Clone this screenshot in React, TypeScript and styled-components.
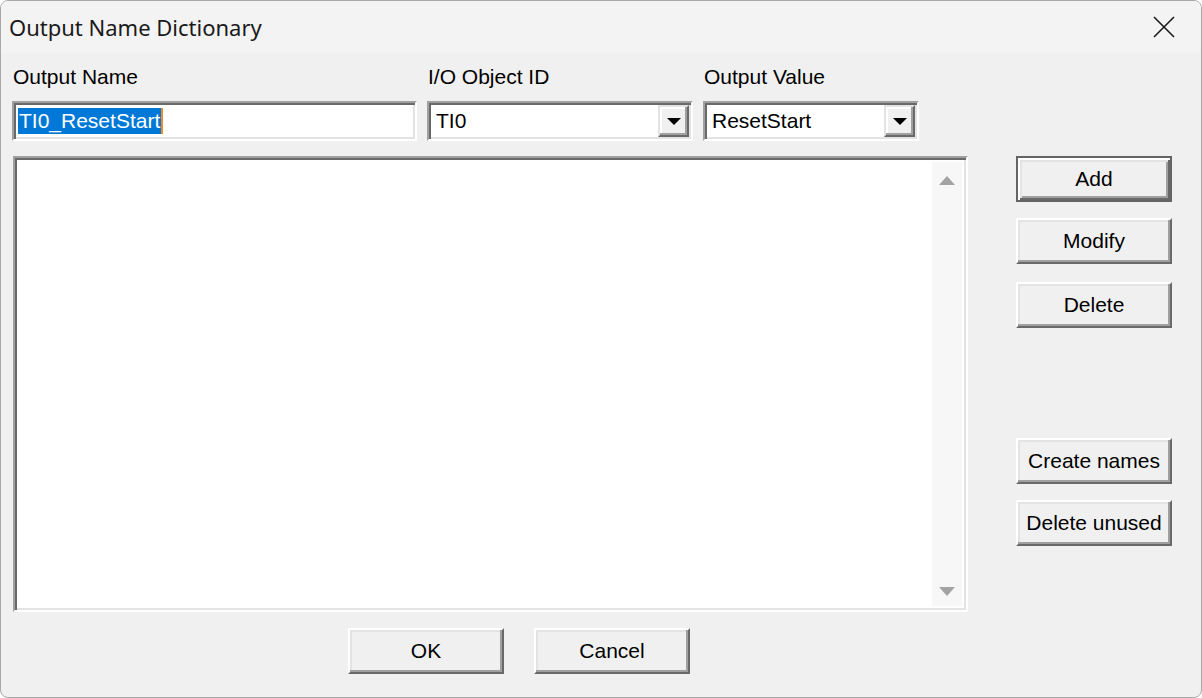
import React from 'react'
import styled, { createGlobalStyle } from 'styled-components'

const GlobalStyle = createGlobalStyle`
  html, body {
    margin: 0;
    padding: 0;
    background: #ffffff;
  }
`

const Window = styled.div`
  box-sizing: border-box;
  width: 1202px;
  height: 698px;
  border: 1px solid #a8a8a8;
  border-radius: 8px;
  background: #f0f0f0;
  overflow: hidden;
  display: flex;
  flex-direction: column;
  font-family: 'Liberation Sans', Arial, sans-serif;
  font-size: 21px;
  color: #000;
`

const TitleBar = styled.div`
  height: 52px;
  flex: none;
  display: flex;
  align-items: center;
  justify-content: space-between;
  padding: 0 0 0 8px;
  background: #f3f3f3;
  font-family: 'Noto Sans', 'Open Sans', sans-serif;
  font-size: 22px;
  color: #1a1a1a;
`

const CloseButton = styled.div`
  width: 70px;
  height: 52px;
  display: flex;
  align-items: center;
  justify-content: center;
  margin-right: 2px;
`

const Body = styled.div`
  flex: 1;
  display: flex;
  flex-direction: column;
  padding: 10px 0 0 11px;
`

const FieldGrid = styled.div`
  display: grid;
  grid-template-columns: 405px 266px 216px;
  column-gap: 10px;
`

const Label = styled.div`
  height: 38px;
  padding-left: 1px;
  line-height: 27px;
`

const Sunken = styled.div`
  box-sizing: border-box;
  height: 40px;
  border: 2px solid;
  border-color: #a0a0a0 #ffffff #ffffff #a0a0a0;
  box-shadow: inset 2px 2px #696969, inset -2px -2px #e3e3e3;
  background: #fff;
  display: flex;
  align-items: center;
  padding: 2px;
`

const Selected = styled.span`
  margin-left: 2px;
  background: #0078d7;
  color: #fff;
  line-height: 26px;
  padding: 0 1px;
  border-right: 2px solid #f08a24;
`

const ComboText = styled.span`
  flex: 1;
  padding-left: 5px;
`

const DropButton = styled.div`
  box-sizing: border-box;
  width: 31px;
  height: 32px;
  background: #f0f0f0;
  border: 2px solid;
  border-color: #e3e3e3 #696969 #696969 #e3e3e3;
  box-shadow: inset -2px -2px #a0a0a0, inset 2px 2px #fff;
  display: flex;
  align-items: center;
  justify-content: center;
`

const Main = styled.div`
  display: flex;
  margin-top: 15px;
  padding-left: 1px;
`

const ListBox = styled(Sunken)`
  width: 955px;
  height: 456px;
  padding: 4px;
  align-items: stretch;
  justify-content: flex-end;
`

const ScrollBar = styled.div`
  width: 30px;
  background: #f7f7f7;
  display: flex;
  flex-direction: column;
  justify-content: space-between;
  align-items: center;
  padding: 14px 0 10px;
`

const SideColumn = styled.div`
  display: flex;
  flex-direction: column;
  margin-left: 48px;
  width: 156px;
`

const PushButton = styled.div<{ $default?: boolean; $gap?: number }>`
  box-sizing: border-box;
  width: 156px;
  height: 46px;
  margin-top: ${({ $gap }) => $gap ?? 0}px;
  background: #f0f0f0;
  display: flex;
  align-items: center;
  justify-content: center;
  border: 2px solid;
  border-color: ${({ $default }) =>
    $default ? '#646464' : '#ffffff #696969 #696969 #ffffff'};
  box-shadow: ${({ $default }) =>
    $default
      ? 'inset 2px 2px #fff, inset -2px -2px #696969, inset 4px 4px #e3e3e3, inset -4px -4px #a0a0a0'
      : 'inset -2px -2px #a0a0a0, inset 2px 2px #e3e3e3'};
`

const BottomRow = styled.div`
  display: flex;
  gap: 30px;
  margin-top: 16px;
  margin-left: 336px;
`

const Arrow = ({ up, color }: { up?: boolean; color: string }) => (
  <svg width="16" height="9" viewBox="0 0 16 9">
    <polygon points={up ? '8,0 16,9 0,9' : '0,0 16,0 8,9'} fill={color} />
  </svg>
)

const DropArrow = () => (
  <svg width="14" height="7" viewBox="0 0 14 7">
    <polygon points="0,0 14,0 7,7" fill="#000" />
  </svg>
)

const App = () => (
  <>
    <GlobalStyle />
    <Window>
      <TitleBar>
        <span>Output Name Dictionary</span>
        <CloseButton>
          <svg width="22" height="22" viewBox="0 0 22 22">
            <path d="M1 1 L21 21 M21 1 L1 21" stroke="#1a1a1a" strokeWidth="1.6" />
          </svg>
        </CloseButton>
      </TitleBar>
      <Body>
        <FieldGrid>
          <Label>Output Name</Label>
          <Label>I/O Object ID</Label>
          <Label>Output Value</Label>
          <Sunken>
            <Selected>TI0_ResetStart</Selected>
          </Sunken>
          <Sunken>
            <ComboText>TI0</ComboText>
            <DropButton>
              <DropArrow />
            </DropButton>
          </Sunken>
          <Sunken>
            <ComboText>ResetStart</ComboText>
            <DropButton>
              <DropArrow />
            </DropButton>
          </Sunken>
        </FieldGrid>
        <Main>
          <ListBox>
            <ScrollBar>
              <Arrow up color="#a3a3a3" />
              <Arrow color="#a3a3a3" />
            </ScrollBar>
          </ListBox>
          <SideColumn>
            <PushButton $default>Add</PushButton>
            <PushButton $gap={16}>Modify</PushButton>
            <PushButton $gap={18}>Delete</PushButton>
            <PushButton $gap={110}>Create names</PushButton>
            <PushButton $gap={16}>Delete unused</PushButton>
          </SideColumn>
        </Main>
        <BottomRow>
          <PushButton>OK</PushButton>
          <PushButton>Cancel</PushButton>
        </BottomRow>
      </Body>
    </Window>
  </>
)

export default App
